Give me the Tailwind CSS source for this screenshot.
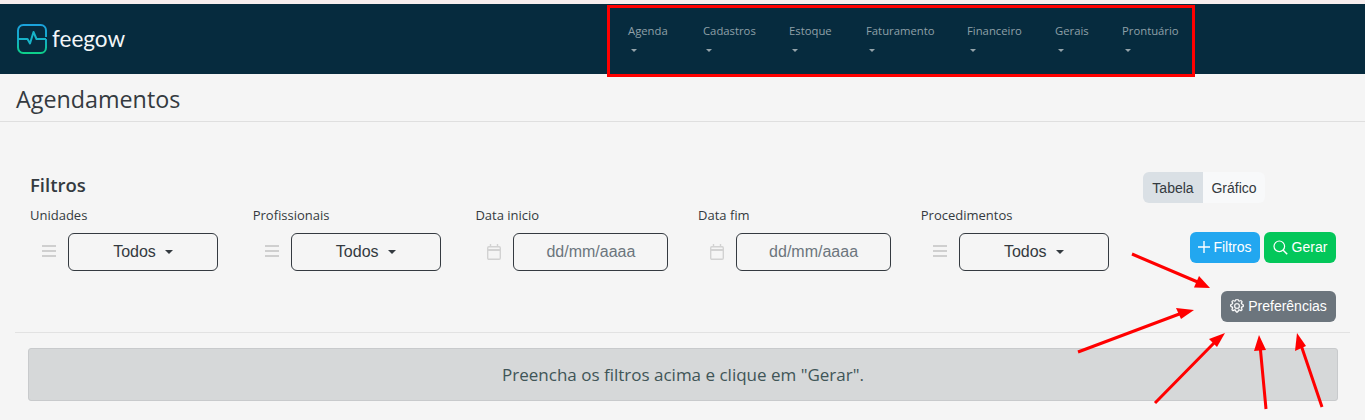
<!DOCTYPE html>
<html lang="pt-BR">
<head>
<meta charset="utf-8">
<script src="https://cdn.jsdelivr.net/npm/@tailwindcss/browser@4"></script>
</head>
<body class="relative h-[420px] w-[1365px] overflow-hidden bg-[#f5f5f5] font-['Liberation_Sans',sans-serif] text-[#343a40]">
<div class="h-1 bg-[#f7eeee]"></div>
<nav class="flex h-[70px] items-center bg-[#062b3e]">
  <div class="flex w-[628px] items-center pl-[17px]">
    <svg width="30" height="30" viewBox="0 0 30 30" fill="none" class="shrink-0">
      <defs><linearGradient id="lg" x1="0" y1="0" x2="0" y2="1"><stop offset="0" stop-color="#1ba3dc"/><stop offset=".55" stop-color="#13abc4"/><stop offset="1" stop-color="#0dd08a"/></linearGradient></defs>
      <path d="M1 15V6.500C1 3.400 3.200 1 6.300 1H23.700C26.800 1 29 3.400 29 6.500V13M29 15V23.500C29 26.600 26.800 29 23.700 29H6.300C3.200 29 1 26.600 1 23.500V15" stroke="url(#lg)" stroke-width="2"/>
      <path d="M1 15H10.500L13 19.500L16.500 8L19.500 15H29" stroke="#17b3c8" stroke-width="2" stroke-linejoin="round"/>
    </svg>
    <span class="ml-[5px] font-['Lato',sans-serif] text-[22.500px] leading-none text-[#f2f6f8]">feegow</span>
  </div>
  <ul class="flex gap-[34px] font-['Open_Sans',sans-serif] text-[11.300px] text-[#8fa0a8]">
    <li class="w-[41px]"><div class="-mt-[5px] leading-[18px] whitespace-nowrap">Agenda</div><span class="mt-[9px] ml-[3px] block h-0 w-0 border-x-[3px] border-t-[3px] border-x-transparent border-t-[#94a3aa]"></span></li>
    <li class="w-[52px]"><div class="-mt-[5px] leading-[18px] whitespace-nowrap">Cadastros</div><span class="mt-[9px] ml-[3px] block h-0 w-0 border-x-[3px] border-t-[3px] border-x-transparent border-t-[#94a3aa]"></span></li>
    <li class="w-[43px]"><div class="-mt-[5px] leading-[18px] whitespace-nowrap">Estoque</div><span class="mt-[9px] ml-[3px] block h-0 w-0 border-x-[3px] border-t-[3px] border-x-transparent border-t-[#94a3aa]"></span></li>
    <li class="w-[67px]"><div class="-mt-[5px] leading-[18px] whitespace-nowrap">Faturamento</div><span class="mt-[9px] ml-[3px] block h-0 w-0 border-x-[3px] border-t-[3px] border-x-transparent border-t-[#94a3aa]"></span></li>
    <li class="w-[54px]"><div class="-mt-[5px] leading-[18px] whitespace-nowrap">Financeiro</div><span class="mt-[9px] ml-[3px] block h-0 w-0 border-x-[3px] border-t-[3px] border-x-transparent border-t-[#94a3aa]"></span></li>
    <li class="w-[33px]"><div class="-mt-[5px] leading-[18px] whitespace-nowrap">Gerais</div><span class="mt-[9px] ml-[3px] block h-0 w-0 border-x-[3px] border-t-[3px] border-x-transparent border-t-[#94a3aa]"></span></li>
    <li class="w-[56px]"><div class="-mt-[5px] leading-[18px] whitespace-nowrap">Prontuário</div><span class="mt-[9px] ml-[3px] block h-0 w-0 border-x-[3px] border-t-[3px] border-x-transparent border-t-[#94a3aa]"></span></li>
  </ul>
</nav>
<header class="flex h-12 items-center border-b border-[#dfdfdf] pt-[4px] pl-4">
  <h1 class="font-['Open_Sans',sans-serif] text-[23.300px] leading-none font-medium text-[#343a40]">Agendamentos</h1>
</header>
<main class="px-[15px]">
  <div class="flex h-[211px] border-b border-[#e2e2e2] pr-[14px]">
    <div class="w-[1115px] pt-[50px] pl-[15px]">
      <h2 class="font-['Open_Sans',sans-serif] text-[18.500px] leading-[26px] font-semibold text-[#343a40]">Filtros</h2>
      <div class="mt-[7px] grid grid-cols-[repeat(5,222.700px)]">
        <div>
          <label class="block font-['Open_Sans',sans-serif] text-[13px] leading-[20px]">Unidades</label>
          <div class="mt-[8px] flex items-center">
            <svg width="14" height="14" viewBox="0 0 14 14" class="ml-3 shrink-0" fill="#cfcfcf"><rect y="0" width="14" height="2"/><rect y="5" width="14" height="2"/><rect y="10" width="14" height="2"/></svg>
            <button class="ml-3 flex h-[38px] w-[150px] items-center justify-center rounded-md border border-[#343a40] text-base">Todos<span class="ml-[9px] h-0 w-0 border-x-[4px] border-t-[4px] border-x-transparent border-t-[#343a40]"></span></button>
          </div>
        </div>
        <div>
          <label class="block font-['Open_Sans',sans-serif] text-[13px] leading-[20px]">Profissionais</label>
          <div class="mt-[8px] flex items-center">
            <svg width="14" height="14" viewBox="0 0 14 14" class="ml-3 shrink-0" fill="#cfcfcf"><rect y="0" width="14" height="2"/><rect y="5" width="14" height="2"/><rect y="10" width="14" height="2"/></svg>
            <button class="ml-3 flex h-[38px] w-[150px] items-center justify-center rounded-md border border-[#343a40] text-base">Todos<span class="ml-[9px] h-0 w-0 border-x-[4px] border-t-[4px] border-x-transparent border-t-[#343a40]"></span></button>
          </div>
        </div>
        <div>
          <label class="block font-['Open_Sans',sans-serif] text-[13px] leading-[20px]">Data inicio</label>
          <div class="mt-[8px] flex items-center">
            <svg width="14" height="16" viewBox="0 0 14 16" class="ml-3 shrink-0" fill="none" stroke="#d2d2d2" stroke-width="1.400"><rect x=".7" y="2.700" width="12.600" height="12.600" rx="1.200"/><path d="M.7 6h12.600" stroke-width="2"/><path d="M3.500 0v3M10.500 0v3"/></svg>
            <div class="ml-3 flex h-[38px] w-[155px] items-center justify-center rounded-md border border-[#343a40] text-base text-[#6c757d]">dd/mm/aaaa</div>
          </div>
        </div>
        <div>
          <label class="block font-['Open_Sans',sans-serif] text-[13px] leading-[20px]">Data fim</label>
          <div class="mt-[8px] flex items-center">
            <svg width="14" height="16" viewBox="0 0 14 16" class="ml-3 shrink-0" fill="none" stroke="#d2d2d2" stroke-width="1.400"><rect x=".7" y="2.700" width="12.600" height="12.600" rx="1.200"/><path d="M.7 6h12.600" stroke-width="2"/><path d="M3.500 0v3M10.500 0v3"/></svg>
            <div class="ml-3 flex h-[38px] w-[155px] items-center justify-center rounded-md border border-[#343a40] text-base text-[#6c757d]">dd/mm/aaaa</div>
          </div>
        </div>
        <div>
          <label class="block font-['Open_Sans',sans-serif] text-[13px] leading-[20px]">Procedimentos</label>
          <div class="mt-[8px] flex items-center">
            <svg width="14" height="14" viewBox="0 0 14 14" class="ml-3 shrink-0" fill="#cfcfcf"><rect y="0" width="14" height="2"/><rect y="5" width="14" height="2"/><rect y="10" width="14" height="2"/></svg>
            <button class="ml-3 flex h-[38px] w-[150px] items-center justify-center rounded-md border border-[#343a40] text-base">Todos<span class="ml-[9px] h-0 w-0 border-x-[4px] border-t-[4px] border-x-transparent border-t-[#343a40]"></span></button>
          </div>
        </div>
      </div>
    </div>
    <div class="flex flex-1 flex-col items-end pt-[50px]">
      <div class="mr-[71px] flex h-[31px] w-[122px] overflow-hidden rounded-md text-sm">
        <span class="flex w-[60px] items-center justify-center bg-[#dae0e5] text-[#343a40]">Tabela</span>
        <span class="flex flex-1 items-center justify-center bg-[#f8f9fa] text-[#343a40]">Gráfico</span>
      </div>
      <div class="mt-[29px] flex gap-1">
        <button class="flex h-[31px] w-[70px] items-center justify-center gap-[3px] rounded-md bg-[#22a7f0] pb-px text-sm text-white"><svg width="12" height="12" viewBox="0 0 12 12" stroke="#fff" stroke-width="1.400"><path d="M6 0v12M0 6h12"/></svg>Filtros</button>
        <button class="flex h-[31px] w-[72px] items-center justify-center gap-1 rounded-md bg-[#03c75a] pb-px text-sm text-white"><svg width="15" height="15" viewBox="0 0 15 15" fill="none" stroke="#fff" stroke-width="1.200"><circle cx="6.300" cy="6.300" r="5.300"/><path d="M10.200 10.200 14.200 14.200" stroke-width="1.500"/></svg>Gerar</button>
      </div>
      <button class="mt-[28px] flex h-[31px] w-[115px] items-center justify-center gap-1 rounded-md bg-[#6c757d] pb-px text-sm text-white"><svg width="14" height="14" viewBox="0 0 16 16" fill="#fff" stroke="#fff" stroke-width=".4"><path d="M8 4.750a3.250 3.250 0 1 0 0 6.500 3.250 3.250 0 0 0 0-6.500zM5.750 8a2.250 2.250 0 1 1 4.500 0 2.250 2.250 0 0 1-4.500 0z"/><path d="M9.800.9c-.5-1.700-3-1.700-3.600 0l-.1.3a.9.9 0 0 1-1.300.6l-.3-.2c-1.600-.9-3.300.9-2.500 2.500l.2.3a.9.9 0 0 1-.6 1.300l-.3.1c-1.700.5-1.700 3 0 3.600l.3.1a.9.9 0 0 1 .6 1.300l-.2.3c-.9 1.600.9 3.300 2.500 2.500l.3-.2a.9.9 0 0 1 1.300.6l.1.3c.5 1.700 3 1.700 3.600 0l.1-.3a.9.9 0 0 1 1.300-.6l.3.2c1.600.9 3.300-.9 2.500-2.500l-.2-.3a.9.9 0 0 1 .6-1.300l.3-.1c1.700-.5 1.700-3 0-3.600l-.3-.1a.9.9 0 0 1-.6-1.300l.2-.3c.9-1.600-.9-3.300-2.500-2.500l-.3.2a.9.9 0 0 1-1.300-.6zM7.200 1.200c.2-.7 1.300-.7 1.600 0l.1.3a1.900 1.900 0 0 0 2.700 1.100l.3-.2c.7-.4 1.500.4 1.100 1.100l-.2.3a1.900 1.900 0 0 0 1.100 2.700l.3.1c.7.2.7 1.300 0 1.600l-.3.1a1.900 1.900 0 0 0-1.100 2.700l.2.3c.4.7-.4 1.500-1.100 1.100l-.3-.2a1.900 1.900 0 0 0-2.700 1.100l-.1.3c-.2.7-1.300.7-1.600 0l-.1-.3a1.900 1.900 0 0 0-2.700-1.100l-.3.2c-.7.4-1.500-.4-1.100-1.100l.2-.3a1.900 1.900 0 0 0-1.100-2.700l-.3-.1c-.7-.2-.7-1.300 0-1.600l.3-.1a1.900 1.900 0 0 0 1.100-2.700l-.2-.3c-.4-.7.4-1.500 1.100-1.100l.3.2a1.900 1.900 0 0 0 2.700-1.100z"/></svg>Preferências</button>
    </div>
  </div>
  <div class="mr-[12px] ml-[13px] mt-[15px] flex h-[53px] items-center justify-center rounded-[3px] border border-[#c8cacc] bg-[#d6d8d9] font-['Open_Sans',sans-serif] text-[17px] text-[#3f5557]">Preencha os filtros acima e clique em "Gerar".</div>
</main>
<div class="pointer-events-none absolute top-[5px] left-[607px] h-[72px] w-[588px] border-[3px] border-[#f00]"></div>
<svg class="pointer-events-none absolute top-0 left-0" width="1365" height="420" fill="none" stroke="#f00" stroke-width="3">
  <g fill="#f00" stroke="none">
    <path d="M1210 288 1194 287.500 1199 276z"/>
    <path d="M1194 310 1181 319 1176 308z"/>
    <path d="M1225 333 1217 347 1209 339z"/>
    <path d="M1259 335 1266 350 1254 351z"/>
    <path d="M1297 333 1306 346 1295 351z"/>
  </g>
  <path d="M1132 254 1200 283M1078 352 1182 313M1155 403 1215 342M1266 409 1260 345M1322 407 1301 345"/>
</svg>
</body>
</html>
